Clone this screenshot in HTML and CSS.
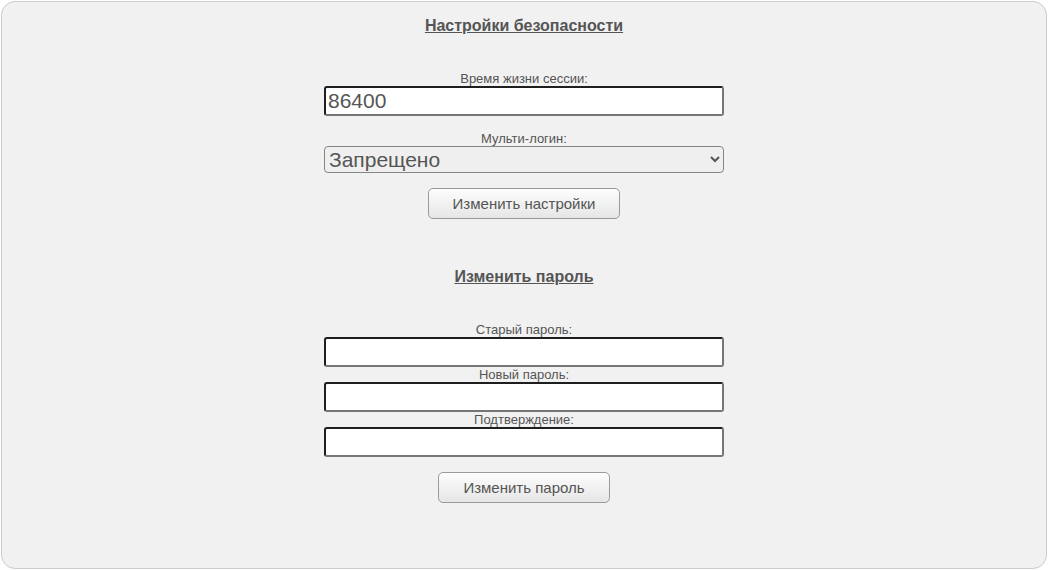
FILE: index.html
```html
<!DOCTYPE html>
<html lang="ru">
<head>
<meta charset="utf-8">
<title>Настройки безопасности</title>
<link rel="stylesheet" href="styles.css">
</head>
<body>
<div class="panel">
  <h2 class="title">Настройки безопасности</h2>
  <form class="form form-settings">
    <label class="lbl" for="ttl">Время жизни сессии:</label>
    <input class="field" id="ttl" type="text" value="86400">
    <label class="lbl gap" for="ml">Мульти-логин:</label>
    <select class="field sel" id="ml">
      <option>Запрещено</option>
      <option>Разрешено</option>
    </select>
    <button class="btn gap" type="button">Изменить настройки</button>
  </form>
  <h2 class="title title2">Изменить пароль</h2>
  <form class="form form-pass">
    <label class="lbl" for="p1">Старый пароль:</label>
    <input class="field" id="p1" type="password">
    <label class="lbl" for="p2">Новый пароль:</label>
    <input class="field" id="p2" type="password">
    <label class="lbl" for="p3">Подтверждение:</label>
    <input class="field" id="p3" type="password">
    <button class="btn gap" type="button">Изменить пароль</button>
  </form>
</div>
</body>
</html>
```
FILE: styles.css
```css
html, body {
  margin: 0;
  padding: 0;
  background: #ffffff;
}
body {
  font-family: "Liberation Sans", Arial, sans-serif;
  color: #555555;
}
.panel {
  box-sizing: border-box;
  margin: 1px 3px 1px 1px;
  height: 568px;
  border: 1px solid #cccccc;
  border-radius: 14px;
  background: #f1f1f1;
  padding-top: 14px;
}
.title {
  margin: 0;
  font-size: 16px;
  line-height: 19px;
  font-weight: bold;
  text-align: center;
  text-decoration: underline;
  color: #555555;
}
.title2 {
  margin-top: 48px;
}
.form {
  display: flex;
  flex-direction: column;
  align-items: center;
  margin: 36px 0 0 0;
}
.lbl {
  font-size: 13px;
  line-height: 15px;
  color: #555555;
}
.gap {
  margin-top: 15px;
}
.field {
  box-sizing: border-box;
  width: 400px;
  height: 30px;
  margin: 0;
  padding: 0 2px;
  font-family: "Liberation Sans", Arial, sans-serif;
  font-size: 21px;
  color: #555555;
  background: #ffffff;
  border: 2px solid;
  border-color: #1e1e1e #767676 #767676 #1e1e1e;
  border-radius: 3px;
  outline: none;
}
.sel {
  height: 27px;
  padding: 0;
  margin-top: 0;
  border: 1px solid #858585;
  border-radius: 4px;
  background: #efefef;
}
.btn {
  box-sizing: border-box;
  height: 31px;
  padding: 0 24px;
  font-family: "Liberation Sans", Arial, sans-serif;
  font-size: 15px;
  color: #555555;
  border: 1px solid #9a9a9a;
  border-radius: 5px;
  background: linear-gradient(#fdfdfd, #e6e6e6);
  cursor: pointer;
}
```
